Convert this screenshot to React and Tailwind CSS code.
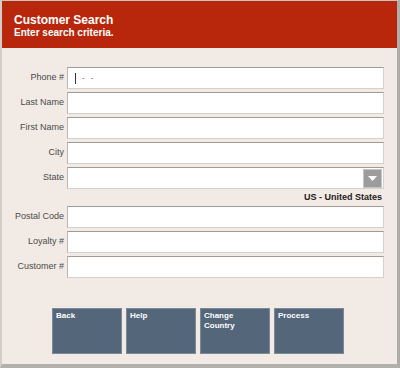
import * as React from 'react';

const font = { fontFamily: '"Liberation Sans", Arial, sans-serif' };

function Field({ label, children }) {
  return (
    <>
      <div className="flex h-[22px] items-center justify-end text-[9px] text-[#4a4a4a]">{label}</div>
      <div className="relative h-[22px] border border-[#d6d0ca] border-t-[#a29b95] border-l-[#bcb5ae] bg-white">
        {children}
      </div>
    </>
  );
}

function Btn({ children }) {
  return (
    <div className="h-[46px] w-[70px] border border-[#7c8a98] bg-[#546679] px-[3px] pt-[2px] text-[8px] font-bold leading-[10px] text-white">
      {children}
    </div>
  );
}

export default function App() {
  return (
    <div style={font} className="flex h-[368px] w-[400px] flex-col border-t border-l-2 border-r-[3px] border-b-[4px] border-t-[#c8c2bc] border-l-[#d4cec8] border-r-[#b0aca8] border-b-[#b4b0ac] bg-[#f2eae4]">
      <div className="h-[47px] bg-[#b8270b] px-[12px] pt-[13px] text-white">
        <div className="text-[12px] font-bold leading-[13px]">Customer Search</div>
        <div className="text-[10px] font-bold leading-[11px]">Enter search criteria.</div>
      </div>
      <div className="grid grid-cols-[62px_1fr] gap-x-[3px] gap-y-[3px] pt-[19px] pr-[13px]">
        <Field label="Phone #">
          <div className="flex h-full items-center pl-[7px] text-[8px] text-[#555]">
            <span className="mr-[6px] inline-block h-[11px] w-px bg-[#333]" />
            <span className="tracking-[6px]">--</span>
          </div>
        </Field>
        <Field label="Last Name" />
        <Field label="First Name" />
        <Field label="City" />
        <Field label="State">
          <div className="absolute top-px right-px flex h-[19px] w-[19px] items-center justify-center border border-[#c4c4c4] bg-[#9c9c9c]">
            <svg width="9" height="5" viewBox="0 0 9 5"><path d="M0 0h9L4.5 5z" fill="#fff" /></svg>
          </div>
        </Field>
        <div />
        <div className="flex h-[11px] items-center justify-end pr-[2px] text-[9px] font-bold text-[#222]">US - United States</div>
        <Field label="Postal Code" />
        <Field label="Loyalty #" />
        <Field label="Customer #" />
      </div>
      <div className="flex gap-[4px] pt-[30px] pl-[50px]">
        <Btn>Back</Btn>
        <Btn>Help</Btn>
        <Btn>Change<br />Country</Btn>
        <Btn>Process</Btn>
      </div>
    </div>
  );
}
